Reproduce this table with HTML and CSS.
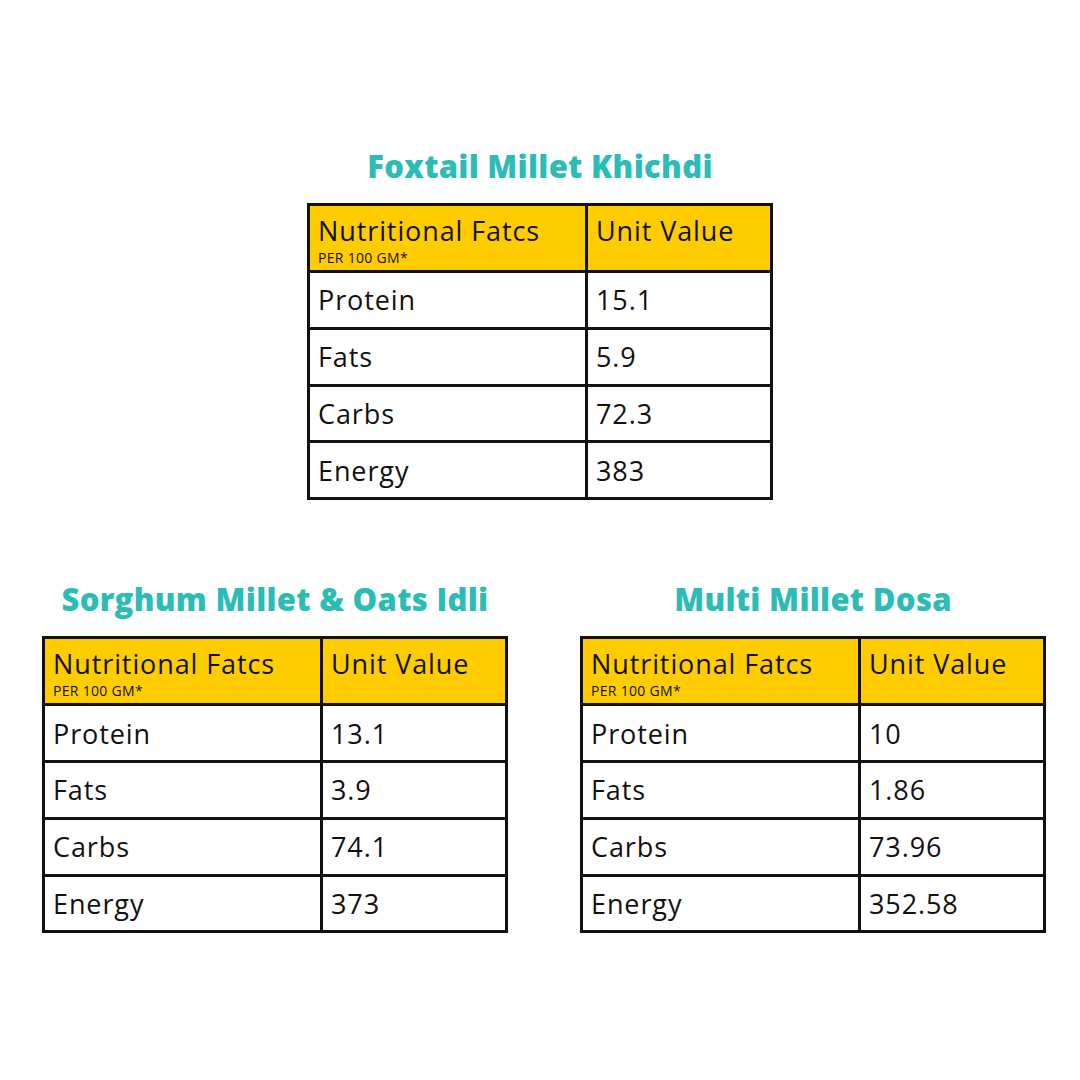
FILE: index.html
```html
<!DOCTYPE html>
<html>
<head>
<meta charset="utf-8">
<link rel="stylesheet" href="styles.css">
</head>
<body>
<main class="page">
  <section class="block block-top">
    <h2 class="title">Foxtail Millet Khichdi</h2>
    <table class="nutri">
      <tr class="head"><th><span class="h-main">Nutritional Fatcs</span><span class="h-sub">PER 100 GM*</span></th><th><span class="h-main">Unit Value</span></th></tr>
      <tr><td>Protein</td><td>15.1</td></tr>
      <tr><td>Fats</td><td>5.9</td></tr>
      <tr><td>Carbs</td><td>72.3</td></tr>
      <tr><td>Energy</td><td>383</td></tr>
    </table>
  </section>
  <div class="row">
    <section class="block">
      <h2 class="title">Sorghum Millet &amp; Oats Idli</h2>
      <table class="nutri">
        <tr class="head"><th><span class="h-main">Nutritional Fatcs</span><span class="h-sub">PER 100 GM*</span></th><th><span class="h-main">Unit Value</span></th></tr>
        <tr><td>Protein</td><td>13.1</td></tr>
        <tr><td>Fats</td><td>3.9</td></tr>
        <tr><td>Carbs</td><td>74.1</td></tr>
        <tr><td>Energy</td><td>373</td></tr>
      </table>
    </section>
    <section class="block">
      <h2 class="title">Multi Millet Dosa</h2>
      <table class="nutri">
        <tr class="head"><th><span class="h-main">Nutritional Fatcs</span><span class="h-sub">PER 100 GM*</span></th><th><span class="h-main">Unit Value</span></th></tr>
        <tr><td>Protein</td><td>10</td></tr>
        <tr><td>Fats</td><td>1.86</td></tr>
        <tr><td>Carbs</td><td>73.96</td></tr>
        <tr><td>Energy</td><td>352.58</td></tr>
      </table>
    </section>
  </div>
</main>
</body>
</html>
```
FILE: styles.css
```css
html, body {
  margin: 0;
  padding: 0;
  background: #ffffff;
}
body {
  width: 1080px;
  height: 1080px;
  overflow: hidden;
  font-family: "Open Sans", "Noto Sans", "Liberation Sans", sans-serif;
  color: #111111;
}
.page {
  display: flex;
  flex-direction: column;
  padding-top: 145px;
}
.block {
  display: flex;
  flex-direction: column;
  align-items: center;
  width: 466px;
}
.block-top {
  align-self: flex-start;
  margin-left: 307px;
}
.row {
  display: flex;
  gap: 72px;
  padding-left: 42px;
  margin-top: 78px;
}
.title {
  margin: 0 0 16px 0;
  font-size: 31px;
  line-height: 42px;
  font-weight: 800;
  color: #2bbdb5;
  letter-spacing: 0.3px;
  white-space: nowrap;
}
.nutri {
  width: 466px;
  border-collapse: collapse;
  table-layout: fixed;
  border: 3px solid #111;
}
.nutri th, .nutri td {
  border: 3px solid #111;
  text-align: left;
  vertical-align: middle;
  padding: 0 0 0 8px;
  font-weight: 500;
  font-size: 27px;
  letter-spacing: 0.9px;
  height: 53.8px;
}
.nutri td:first-child, .nutri th:first-child {
  width: 267px;
}
.nutri .head th {
  background: #ffcc00;
  height: 55px;
  vertical-align: top;
  padding-top: 6px;
  padding-bottom: 3px;
}
.h-main {
  display: block;
  font-size: 27px;
  line-height: 37px;
  font-weight: 500;
}
.h-sub {
  display: block;
  font-size: 14px;
  line-height: 18px;
  font-weight: 500;
  letter-spacing: 0.3px;
}
```
